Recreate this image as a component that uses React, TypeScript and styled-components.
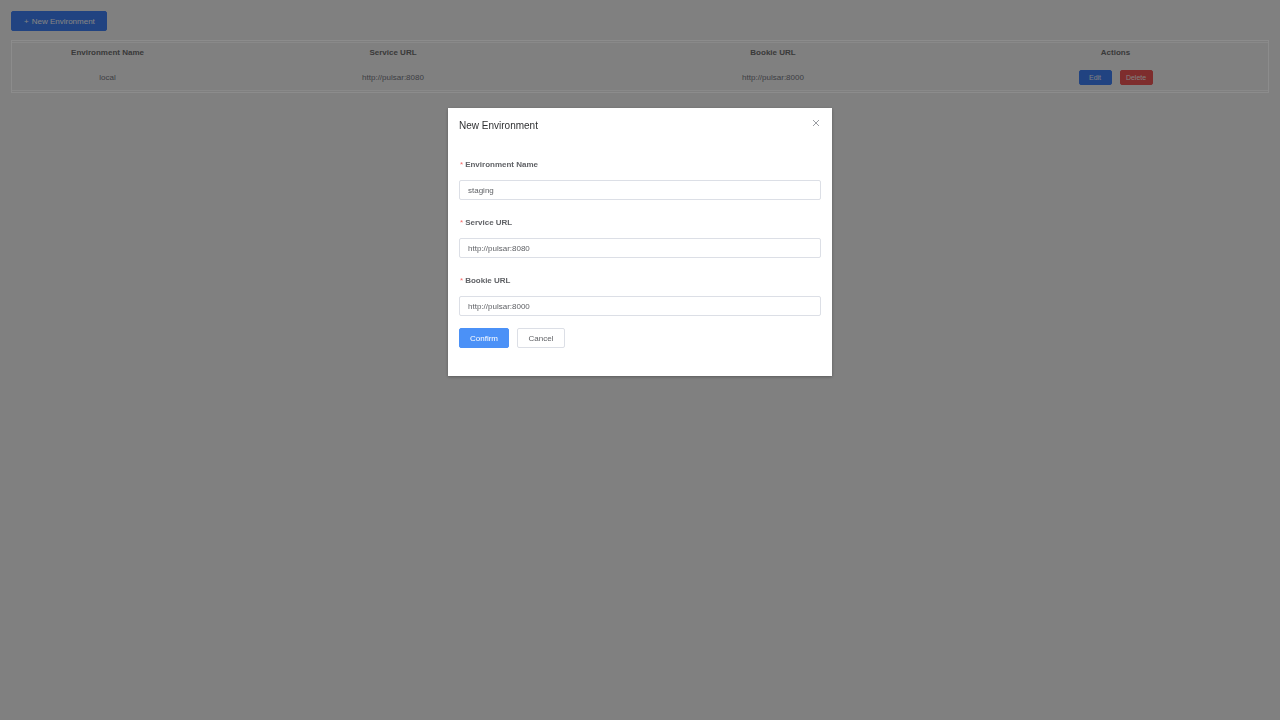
import React from "react";
import styled, { createGlobalStyle } from "styled-components";

const Global = createGlobalStyle`
  html, body { margin: 0; padding: 0; background: #e9e9e9; }
  body { font-family: "Liberation Sans", Arial, Helvetica, sans-serif; color: #606266; }
  * { box-sizing: border-box; }
`;

const Page = styled.div`
  padding: 11px;
  min-height: 720px;
`;

const Toolbar = styled.div`
  display: flex;
  margin-bottom: 9px;
`;

const Button = styled.button<{ $variant?: "primary" | "danger" | "default"; $w?: number; $h?: number }>`
  display: inline-flex;
  align-items: center;
  justify-content: center;
  height: ${(p) => p.$h ?? 20}px;
  width: ${(p) => (p.$w ? `${p.$w}px` : "auto")};
  padding: 0 ${(p) => (p.$w ? 0 : 13)}px;
  font-family: inherit;
  font-size: ${(p) => (p.$h && p.$h < 18 ? 7 : 8)}px;
  border-radius: 2px;
  cursor: pointer;
  border: 1px solid
    ${(p) => (p.$variant === "primary" ? "#4b91f7" : p.$variant === "danger" ? "#f05a5a" : "#dcdfe6")};
  background: ${(p) => (p.$variant === "primary" ? "#4b91f7" : p.$variant === "danger" ? "#f05a5a" : "#ffffff")};
  color: ${(p) => (p.$variant === "default" || !p.$variant ? "#606266" : "#ffffff")};
`;

const RowButton = styled(Button)`
  background: ${(p) => (p.$variant === "danger" ? "#e65252" : "#3d7bec")};
  border-color: ${(p) => (p.$variant === "danger" ? "#e65252" : "#3d7bec")};
  color: #e8e8e8;
`;

const TopButton = styled(Button)`
  background: #3d7bec;
  border-color: #3d7bec;
  gap: 3px;
  font-size: 8px;
  padding: 0 11px 0 12px;
  color: #eeeeee;
`;

const TableFrame = styled.div`
  border: 1px solid #ffffff;
  padding: 1px 0;
`;

const TableInner = styled.div`
  border-top: 1px solid #fafafa;
  border-bottom: 1px solid #fafafa;
`;

const Row = styled.div<{ $head?: boolean }>`
  display: grid;
  grid-template-columns: 191px 380px 380px 1fr;
  height: ${(p) => (p.$head ? 21 : 26)}px;
  padding-bottom: ${(p) => (p.$head ? 2 : 0)}px;
  align-items: center;
`;

const Cell = styled.div<{ $head?: boolean }>`
  text-align: center;
  font-size: 8px;
  font-weight: ${(p) => (p.$head ? 700 : 400)};
  color: ${(p) => (p.$head ? "#6a6a6a" : "#72747c")};
  display: flex;
  justify-content: center;
  align-items: center;
  gap: 8px;
`;

const Mask = styled.div`
  position: fixed;
  inset: 0;
  background: rgba(0, 0, 0, 0.45);
`;

const Modal = styled.div`
  position: fixed;
  top: 108px;
  left: 448px;
  width: 384px;
  background: #ffffff;
  box-shadow: 0 1px 3px rgba(0, 0, 0, 0.3);
`;

const ModalHeader = styled.div`
  padding: 11px 11px 0;
  height: 25px;
  font-size: 10px;
  line-height: 14px;
  color: #303133;
`;

const Close = styled.button`
  position: absolute;
  top: 11px;
  right: 12px;
  width: 8px;
  height: 8px;
  padding: 0;
  border: none;
  background: transparent;
  display: flex;
  cursor: pointer;
`;

const ModalBody = styled.form`
  padding: 25px 11px 28px;
  display: flex;
  flex-direction: column;
  gap: 16px;
`;

const Field = styled.div`
  display: flex;
  flex-direction: column;
  gap: 9px;
`;

const Label = styled.label`
  font-size: 8px;
  line-height: 13px;
  font-weight: 700;
  color: #606266;
  display: flex;
  align-items: center;
`;

const Star = styled.span`
  color: #f56c6c;
  font-weight: 400;
  margin: 0 2px 0 1px;
`;

const Input = styled.input`
  height: 20px;
  width: 100%;
  border: 1px solid #dcdfe6;
  border-radius: 2px;
  padding: 0 8px;
  font-family: inherit;
  font-size: 8px;
  color: #606266;
  outline: none;
  background: #fff;
`;

const Actions = styled.div`
  display: flex;
  gap: 8px;
  margin-top: -4px;
`;

const rows = [{ name: "local", service: "http://pulsar:8080", bookie: "http://pulsar:8000" }];

export default function App() {
  return (
    <>
      <Global />
      <Page>
        <Toolbar>
          <TopButton $variant="primary">
            <span>+</span>
            <span>New Environment</span>
          </TopButton>
        </Toolbar>
        <TableFrame>
          <TableInner>
            <Row $head>
              <Cell $head>Environment Name</Cell>
              <Cell $head>Service URL</Cell>
              <Cell $head>Bookie URL</Cell>
              <Cell $head>Actions</Cell>
            </Row>
            {rows.map((r) => (
              <Row key={r.name}>
                <Cell>{r.name}</Cell>
                <Cell>{r.service}</Cell>
                <Cell>{r.bookie}</Cell>
                <Cell>
                  <RowButton $variant="primary" $w={33} $h={15}>Edit</RowButton>
                  <RowButton $variant="danger" $w={33} $h={15}>Delete</RowButton>
                </Cell>
              </Row>
            ))}
          </TableInner>
        </TableFrame>
      </Page>
      <Mask />
      <Modal>
        <ModalHeader>New Environment</ModalHeader>
        <Close aria-label="Close">
          <svg width="8" height="8" viewBox="0 0 8 8">
            <path d="M1 1 L7 7 M7 1 L1 7" stroke="#909399" strokeWidth="0.9" />
          </svg>
        </Close>
        <ModalBody onSubmit={(e) => e.preventDefault()}>
          <Field>
            <Label><Star>*</Star>Environment Name</Label>
            <Input defaultValue="staging" />
          </Field>
          <Field>
            <Label><Star>*</Star>Service URL</Label>
            <Input defaultValue="http://pulsar:8080" />
          </Field>
          <Field>
            <Label><Star>*</Star>Bookie URL</Label>
            <Input defaultValue="http://pulsar:8000" />
          </Field>
          <Actions>
            <Button type="button" $variant="primary" $w={50}>Confirm</Button>
            <Button type="button" $w={48}>Cancel</Button>
          </Actions>
        </ModalBody>
      </Modal>
    </>
  );
}
